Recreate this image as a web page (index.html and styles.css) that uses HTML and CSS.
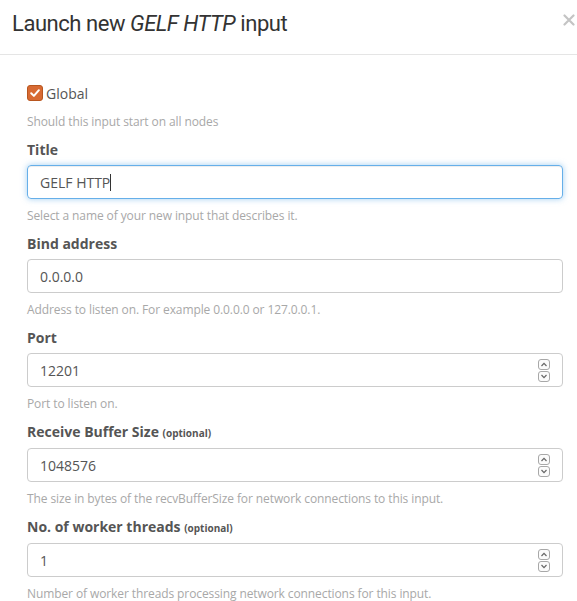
FILE: index.html
```html
<!DOCTYPE html>
<html>
<head>
<meta charset="utf-8">
<link rel="stylesheet" href="styles.css">
</head>
<body>
<div class="modal">
  <div class="modal-header">
    <h4 class="modal-title">Launch new <em>GELF HTTP</em> input</h4>
    <span class="close"><svg width="12" height="12" viewBox="0 0 12 12"><path d="M1.5 1.5 L10.5 10.5 M10.5 1.5 L1.5 10.5" stroke="#c4c4c4" stroke-width="2.2" stroke-linecap="round"/></svg></span>
  </div>
  <div class="modal-body">
    <label class="check-row">
      <span class="checkbox">
        <svg width="12" height="12" viewBox="0 0 12 12"><path d="M2.2 6.2 L4.9 8.9 L9.9 3.2" fill="none" stroke="#fff" stroke-width="2" stroke-linecap="round" stroke-linejoin="round"/></svg>
      </span>
      <span class="check-label">Global</span>
    </label>
    <p class="help first-help">Should this input start on all nodes</p>

    <div class="group">
      <div class="label">Title</div>
      <div class="control focus"><span class="value">GELF HTTP</span><span class="caret"></span></div>
      <p class="help">Select a name of your new input that describes it.</p>
    </div>

    <div class="group">
      <div class="label">Bind address</div>
      <div class="control"><span class="value">0.0.0.0</span></div>
      <p class="help">Address to listen on. For example 0.0.0.0 or 127.0.0.1.</p>
    </div>

    <div class="group">
      <div class="label">Port</div>
      <div class="control"><span class="value">12201</span>
        <svg class="spin" width="14" height="25" viewBox="0 0 14 25"><rect x="1.5" y="1.5" width="11" height="10" rx="2.5" fill="#fbfbfb" stroke="#a8a8a8"/><rect x="1.5" y="13.5" width="11" height="10" rx="2.5" fill="#fbfbfb" stroke="#a8a8a8"/><path d="M4.5 8 L7 5.3 L9.5 8" fill="none" stroke="#666" stroke-width="1.2"/><path d="M4.5 17 L7 19.7 L9.5 17" fill="none" stroke="#666" stroke-width="1.2"/></svg>
      </div>
      <p class="help">Port to listen on.</p>
    </div>

    <div class="group">
      <div class="label">Receive Buffer Size <small>(optional)</small></div>
      <div class="control"><span class="value">1048576</span>
        <svg class="spin" width="14" height="25" viewBox="0 0 14 25"><rect x="1.5" y="1.5" width="11" height="10" rx="2.5" fill="#fbfbfb" stroke="#a8a8a8"/><rect x="1.5" y="13.5" width="11" height="10" rx="2.5" fill="#fbfbfb" stroke="#a8a8a8"/><path d="M4.5 8 L7 5.3 L9.5 8" fill="none" stroke="#666" stroke-width="1.2"/><path d="M4.5 17 L7 19.7 L9.5 17" fill="none" stroke="#666" stroke-width="1.2"/></svg>
      </div>
      <p class="help">The size in bytes of the recvBufferSize for network connections to this input.</p>
    </div>

    <div class="group">
      <div class="label">No. of worker threads <small>(optional)</small></div>
      <div class="control"><span class="value">1</span>
        <svg class="spin" width="14" height="25" viewBox="0 0 14 25"><rect x="1.5" y="1.5" width="11" height="10" rx="2.5" fill="#fbfbfb" stroke="#a8a8a8"/><rect x="1.5" y="13.5" width="11" height="10" rx="2.5" fill="#fbfbfb" stroke="#a8a8a8"/><path d="M4.5 8 L7 5.3 L9.5 8" fill="none" stroke="#666" stroke-width="1.2"/><path d="M4.5 17 L7 19.7 L9.5 17" fill="none" stroke="#666" stroke-width="1.2"/></svg>
      </div>
      <p class="help">Number of worker threads processing network connections for this input.</p>
    </div>
  </div>
</div>
</body>
</html>
```

FILE: styles.css
```css
* { box-sizing: border-box; }
html, body { margin: 0; padding: 0; background: #fff; }
body {
  font-family: "Open Sans", "Noto Sans", sans-serif;
  color: #555;
  width: 577px;
  height: 601px;
  overflow: hidden;
}
.modal-header {
  display: flex;
  justify-content: space-between;
  align-items: flex-start;
  height: 55px;
  padding: 11px 2px 0 12px;
  border-bottom: 1px solid #e5e5e5;
}
.modal-title {
  margin: 0;
  font-family: Roboto, "Open Sans", sans-serif;
  font-weight: 400;
  font-size: 22px;
  line-height: 26px;
  letter-spacing: -0.45px;
  color: #333;
}
.modal-title em { font-style: italic; }
.close {
  display: flex;
  margin-top: 3px;
}
.modal-body {
  padding: 28px 14px 0 27px;
}
.check-row {
  display: flex;
  align-items: center;
  gap: 3px;
  height: 20px;
}
.checkbox {
  width: 16px;
  height: 16px;
  border-radius: 3px;
  background: #d86a33;
  border: 1px solid #b8561f;
  display: flex;
  align-items: center;
  justify-content: center;
}
.check-label {
  font-size: 14px;
  color: #555;
}
.help {
  margin: 8px 0 0;
  font-size: 12px;
  line-height: 17px;
  letter-spacing: -0.1px;
  color: #a8a8a8;
}
.first-help { margin-top: 10px; }
.group { margin-top: 10px; }
.label {
  font-size: 14px;
  font-weight: 700;
  line-height: 20px;
  color: #555;
  margin-bottom: 5px;
}
.label small {
  font-size: 10px;
  font-weight: 700;
}
.control {
  display: flex;
  align-items: center;
  height: 34px;
  padding: 0 12px;
  border: 1px solid #ccc;
  border-radius: 4px;
  font-size: 14px;
  color: #555;
}
.control .value { flex: 0 0 auto; }
.control.focus {
  border-color: #66afe9;
  box-shadow: inset 0 1px 1px rgba(0,0,0,.075), 0 0 6px rgba(102,175,233,.6);
}
.caret {
  display: inline-block;
  width: 1px;
  height: 17px;
  background: #333;
}
.spin {
  margin-left: auto;
  margin-right: -1px;
}
```
